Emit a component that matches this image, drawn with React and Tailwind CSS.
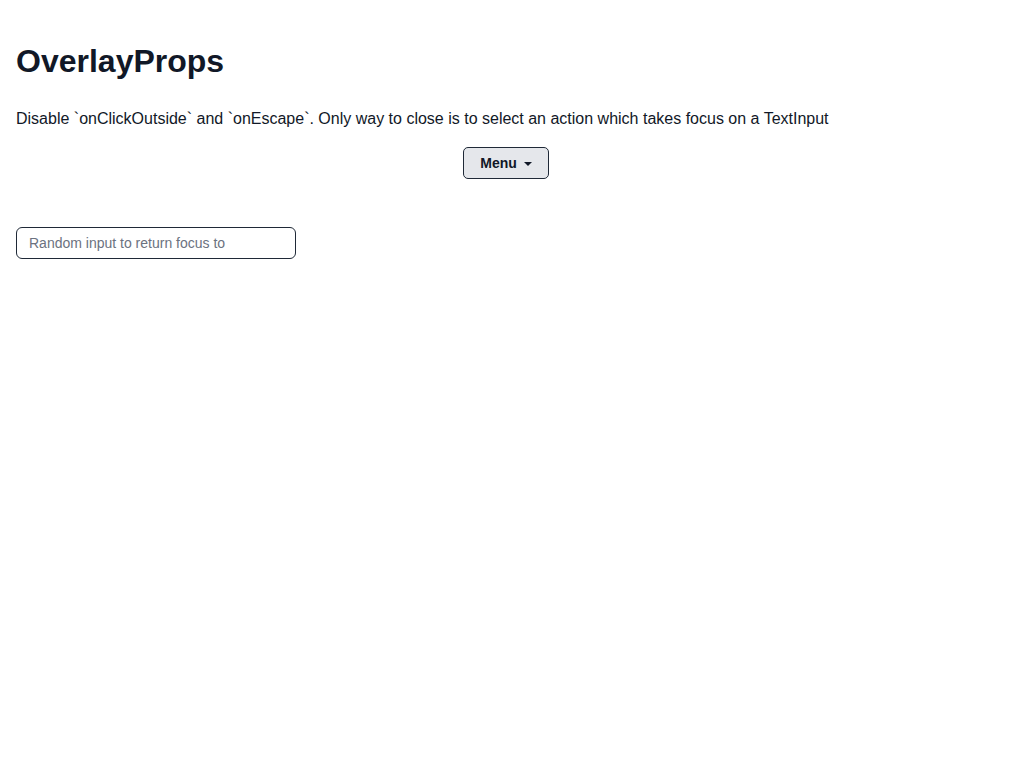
export default function App() {
  return (
    <div className="min-h-screen bg-white p-4 text-[#111827]">
      <div className="font-['Liberation_Sans',Arial,sans-serif]">
        <h1 className="mt-[26px] text-[32px] font-bold leading-[38px]">OverlayProps</h1>
        <p className="mt-[28px] text-base leading-[22px]">
          Disable `onClickOutside` and `onEscape`. Only way to close is to select an action which takes focus on a TextInput
        </p>
        <div className="mt-[17px] flex justify-center">
          <button className="flex h-8 w-[86px] items-center justify-center gap-[7px] rounded-[5px] border border-[#1f2937] bg-[#e5e7eb] text-sm font-bold text-[#111827]">
            <span>Menu</span>
            <svg width="8" height="4" viewBox="0 0 8 4" className="mt-[1px]">
              <path d="M0 0 L8 0 L4 4 Z" fill="#111827" />
            </svg>
          </button>
        </div>
        <div className="mt-12">
          <input
            className="h-8 w-[280px] rounded-[6px] border border-[#1f2937] px-3 text-sm text-[#111827] outline-none placeholder:text-[#6b7280]"
            placeholder="Random input to return focus to"
          />
        </div>
      </div>
    </div>
  );
}
